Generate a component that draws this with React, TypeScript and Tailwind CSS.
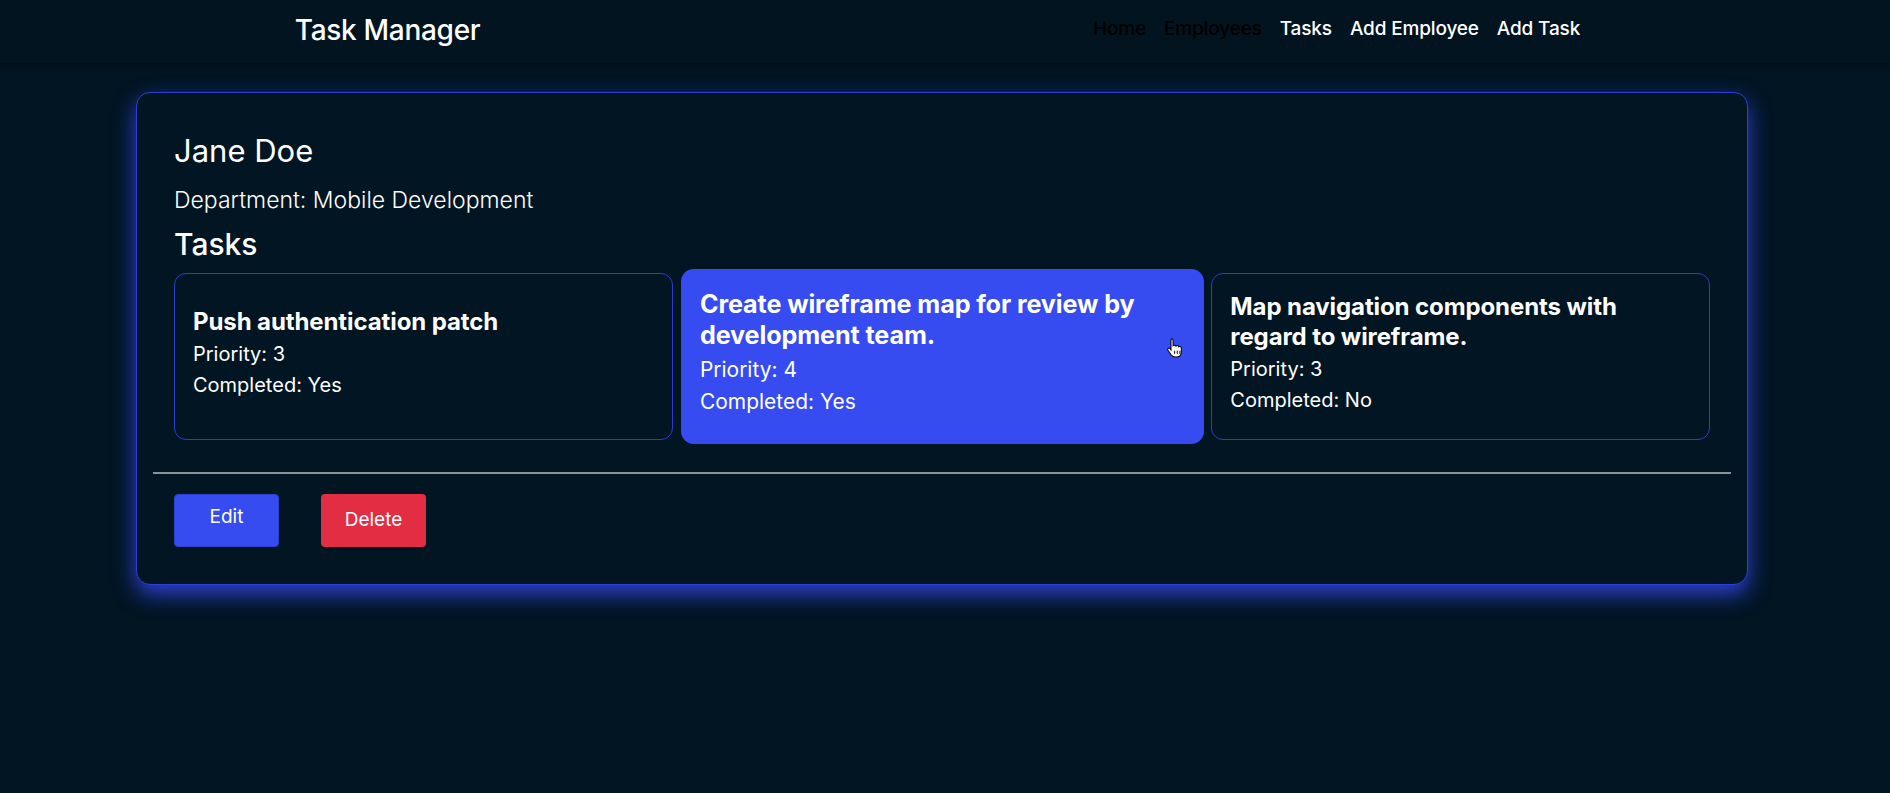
import React from "react";

const tasks = [
  { title: "Push authentication patch", priority: 3, completed: "Yes", active: false },
  { title: "Create wireframe map for review by development team.", priority: 4, completed: "Yes", active: true },
  { title: "Map navigation components with regard to wireframe.", priority: 3, completed: "No", active: false },
];

function Cursor() {
  return (
    <svg width="16" height="20" viewBox="0 0 16 20" className="absolute right-[20px] top-[65px]">
      <path
        d="M5 1.5c.9 0 1.5.6 1.5 1.5v5.2c.3-.3.8-.5 1.3-.5.7 0 1.2.4 1.4.9.3-.3.8-.5 1.3-.5.8 0 1.3.5 1.4 1.1.3-.2.6-.3 1-.3.9 0 1.5.7 1.5 1.6v3.6c0 2.9-2 4.9-4.8 4.9H8.4c-1.6 0-2.7-.7-3.6-1.9L1.6 12.6c-.5-.7-.3-1.5.3-1.9.6-.4 1.4-.3 1.8.3l.8 1.1V3c0-.9.6-1.5 1.5-1.5z"
        fill="#fff"
        stroke="#000"
        strokeWidth="1"
      />
      <path d="M8 13v3M10.5 13v3M13 13v3" stroke="#000" strokeWidth="0.9" />
    </svg>
  );
}

function TaskBody({ t }: { t: (typeof tasks)[number] }) {
  return (
    <>
      <div className="text-[24px] leading-[30px] font-bold tracking-[-0.1px]">{t.title}</div>
      <div className="mt-[2px] text-[20px] leading-[31px]">Priority: {t.priority}</div>
      <div className="text-[20px] leading-[31px]">Completed: {t.completed}</div>
    </>
  );
}

export default function App() {
  return (
    <div className="min-h-[793px] bg-[#011522] text-white" style={{ fontFamily: "Inter, 'Noto Sans', sans-serif" }}>
      <header className="h-[63px] pb-[4px] bg-[#01141f] shadow-[0_2px_4px_rgba(0,0,0,0.35)] flex items-center justify-around">
        <div className="text-[28px] font-medium tracking-[-0.3px] pr-[14px]">Task Manager</div>
        <nav className="flex items-center text-[19px] font-medium tracking-[-0.15px] pr-[6px]">
          <a className="px-[9px] text-black">Home</a>
          <a className="px-[9px] text-black">Employees</a>
          <a className="px-[9px] text-white">Tasks</a>
          <a className="px-[9px] text-white">Add Employee</a>
          <a className="px-[9px] text-white">Add Task</a>
        </nav>
      </header>

      <main className="pt-[29px]">
        <div className="ml-[136px] w-[1612px] rounded-[14px] border-[1.5px] border-[#2b40d4] bg-[#011522] p-4 shadow-[0_9px_22px_rgba(52,70,234,0.9)]">
          <div className="px-[21px] pt-[24px]">
            <h1 className="text-[31px] leading-[36px] font-normal">Jane Doe</h1>
            <p className="mt-[15px] text-[23px] leading-[32px] font-light">Department: Mobile Development</p>
            <h2 className="mt-[10px] text-[30px] leading-[36px] font-medium">Tasks</h2>
            <div className="mt-[11px] grid grid-cols-3 gap-[20px]">
              {tasks.map((t) =>
                t.active ? (
                  <div
                    key={t.title}
                    className="relative h-[167px] scale-[1.048] rounded-[12px] bg-[#364bf0] px-[18px] pb-[6px] flex flex-col justify-center"
                  >
                    <TaskBody t={t} />
                    <Cursor />
                  </div>
                ) : (
                  <div
                    key={t.title}
                    className="h-[167px] rounded-[12px] border border-[#2a3fcf] px-[18px] pb-[6px] flex flex-col justify-center"
                  >
                    <TaskBody t={t} />
                  </div>
                )
              )}
            </div>
          </div>
          <hr className="mt-[32px] border-0 h-[2px] bg-[#8a9399]" />
          <div className="px-[21px] pt-[20px] pb-[21px] flex gap-[42px]">
            <button className="w-[105px] h-[53px] rounded-[4px] bg-[#364bf0] border border-[#2e40cc] text-[19px] flex justify-center pt-[8px]">
              Edit
            </button>
            <button className="w-[105px] h-[53px] rounded-[4px] bg-[#e32d43] text-[19px] flex items-center justify-center">
              Delete
            </button>
          </div>
        </div>
      </main>
    </div>
  );
}
